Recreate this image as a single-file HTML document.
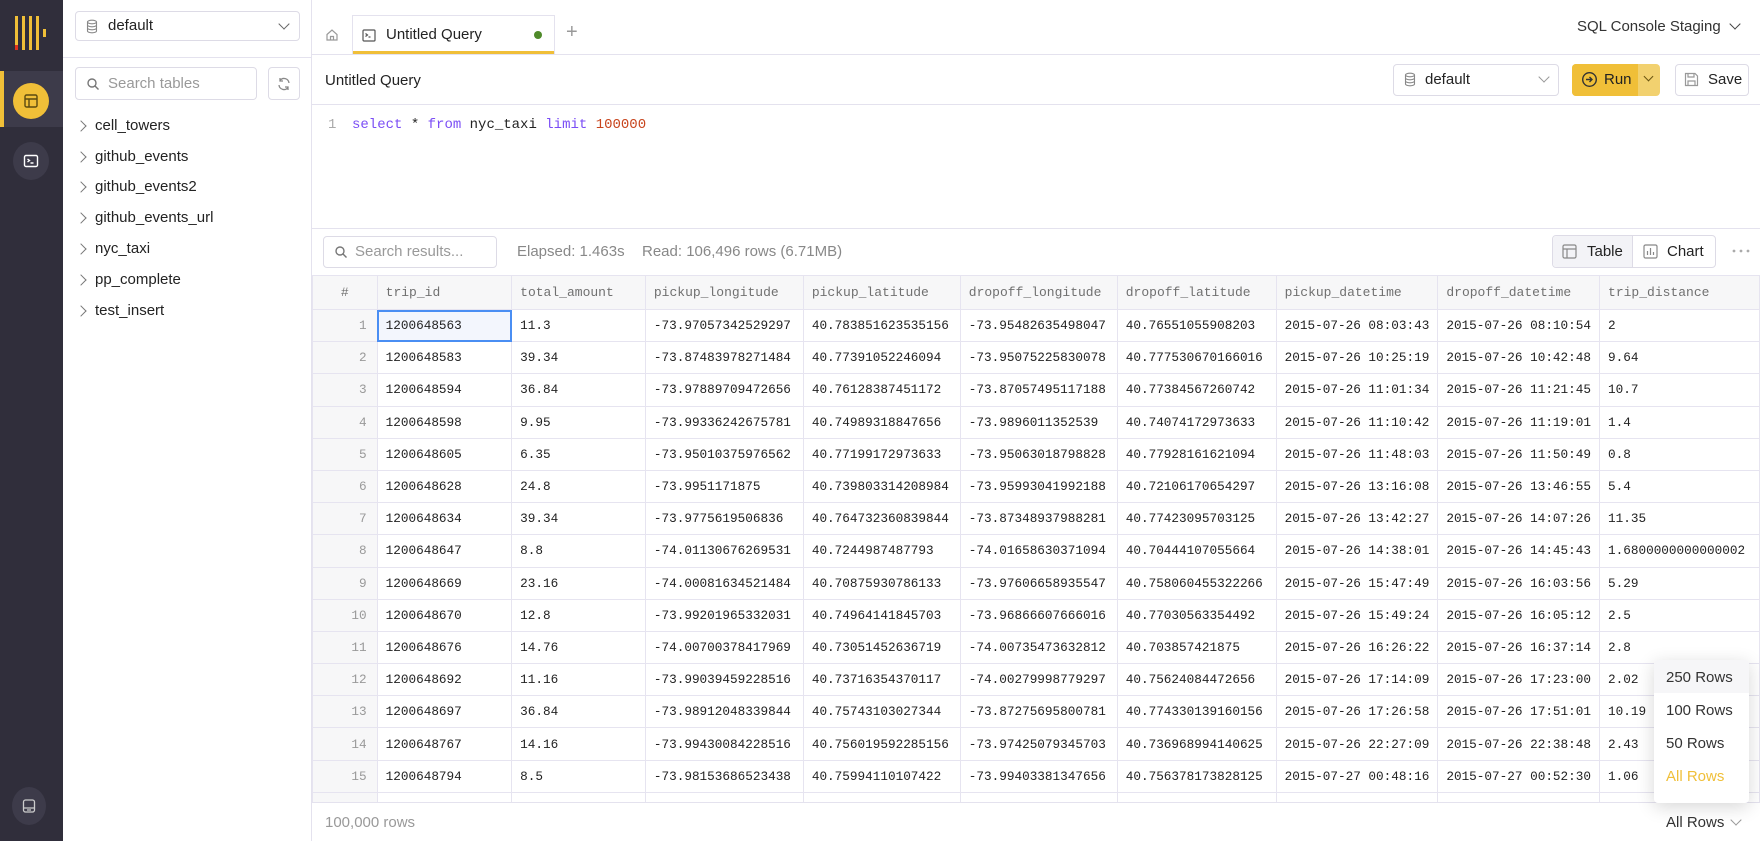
<!DOCTYPE html>
<html><head><meta charset="utf-8">
<style>
*{box-sizing:border-box;margin:0;padding:0}
body{width:1760px;height:841px;overflow:hidden;font-family:"Liberation Sans",sans-serif;color:#232323;background:#fff;position:relative}
.abs{position:absolute}
.rail{left:0;top:0;width:63px;height:841px;background:#302e3b}
.side{left:63px;top:0;width:249px;height:841px;background:#fff;border-right:1px solid #e4e2ee}
.box{position:absolute;border:1px solid #dddbe6;border-radius:4px;background:#fff}
.tree{position:absolute;left:95px;font-size:15px;color:#222}
.chev{position:absolute;left:77px;width:8px;height:8px;border-right:1.5px solid #777;border-top:1.5px solid #777;transform:rotate(45deg)}
.mono{font-family:"Liberation Mono",monospace}
.hline{position:absolute;height:1px;background:#e4e2ee}
.tbl{left:312px;top:275px;width:1448px;height:527px;overflow:hidden}
table{border-collapse:collapse;table-layout:fixed;font-family:"Liberation Mono",monospace;font-size:12.7px}
td,th{height:32.2px;border:1px solid #e6e4f0;padding:0 8px;white-space:nowrap;overflow:hidden;text-align:left;font-weight:normal}
th{background:#f7f7f8;color:#707070;height:34px;font-size:13px}
td.n{background:#f7f7f8;color:#999;text-align:right;padding-right:10px}
td{color:#222}
.sel{outline:2px solid #4a8ef3;outline-offset:-2px;background:#f3f6fd}
</style></head><body>

<div class="abs rail">
  <div class="abs" style="left:15px;top:16px;width:3px;height:34px;background:#f0bf38"></div>
  <div class="abs" style="left:15px;top:45px;width:3px;height:5px;background:#e0331e"></div>
  <div class="abs" style="left:22px;top:16px;width:3px;height:34px;background:#f0bf38"></div>
  <div class="abs" style="left:29px;top:16px;width:3px;height:34px;background:#f0bf38"></div>
  <div class="abs" style="left:36px;top:16px;width:3px;height:34px;background:#f0bf38"></div>
  <div class="abs" style="left:43px;top:29px;width:3px;height:8px;background:#f0bf38"></div>
  <div class="abs" style="left:0;top:71px;width:63px;height:56px;background:#3d3b4a"></div>
  <div class="abs" style="left:0;top:71px;width:4px;height:56px;background:#f0bf38"></div>
  <div class="abs" style="left:13px;top:83px;width:36px;height:36px;border-radius:50%;background:#f0bf38"></div>
  <svg class="abs" style="left:23px;top:93px" width="16" height="16" viewBox="0 0 16 16" fill="none" stroke="#5b4a10" stroke-width="1.4"><rect x="2" y="2" width="12" height="12" rx="1.5"/><path d="M2 6h12M6 6v8"/></svg>
  <div class="abs" style="left:13px;top:142px;width:36px;height:38px;border-radius:50%;background:#3d3b4a"></div>
  <svg class="abs" style="left:23px;top:153px" width="16" height="16" viewBox="0 0 16 16" fill="none" stroke="#fff" stroke-width="1.4"><rect x="1.5" y="2.5" width="13" height="11" rx="1.5"/><path d="M4.5 6l2 1.5-2 1.5M7.5 10h3"/></svg>
  <div class="abs" style="left:12px;top:787px;width:34px;height:38px;border-radius:50%;background:#3d3b4a"></div>
  <svg class="abs" style="left:21px;top:798px" width="16" height="16" viewBox="0 0 16 16" fill="none" stroke="#ccc" stroke-width="1.3"><rect x="2.5" y="2" width="11" height="12" rx="2"/><path d="M2.5 10h11M6 12h4"/></svg>
</div>

<div class="abs side"></div>
<div class="box" style="left:75px;top:11px;width:225px;height:30px"></div>
<svg class="abs" style="left:85px;top:19px" width="14" height="15" viewBox="0 0 14 15" fill="none" stroke="#888" stroke-width="1.1"><ellipse cx="7" cy="3" rx="4.5" ry="1.8"/><path d="M2.5 3v9c0 1 2 1.8 4.5 1.8s4.5-.8 4.5-1.8V3M2.5 6c0 1 2 1.8 4.5 1.8s4.5-.8 4.5-1.8M2.5 9c0 1 2 1.8 4.5 1.8s4.5-.8 4.5-1.8"/></svg>
<div class="abs" style="left:108px;top:17px;font-size:15px">default</div>
<div class="abs" style="left:280px;top:20px;width:8px;height:8px;border-right:1.5px solid #666;border-bottom:1.5px solid #666;transform:rotate(45deg)"></div>
<div class="hline" style="left:63px;top:57px;width:249px"></div>
<div class="box" style="left:75px;top:67px;width:182px;height:33px"></div>
<svg class="abs" style="left:86px;top:77px" width="14" height="14" viewBox="0 0 14 14" fill="none" stroke="#777" stroke-width="1.4"><circle cx="6" cy="6" r="4"/><path d="M9 9l3.5 3.5"/></svg>
<div class="abs" style="left:108px;top:75px;font-size:15px;color:#999">Search tables</div>
<div class="box" style="left:268px;top:67px;width:32px;height:33px"></div>
<svg class="abs" style="left:276px;top:76px" width="16" height="16" viewBox="0 0 16 16" fill="none" stroke="#888" stroke-width="1.3"><path d="M13 7a5 5 0 0 0-9-2.5M3 9a5 5 0 0 0 9 2.5M4 2v3h3M12 14v-3h-3"/></svg>

<div class="chev" style="top:122px"></div><div class="tree" style="top:117px">cell_towers</div>
<div class="chev" style="top:153px"></div><div class="tree" style="top:148px">github_events</div>
<div class="chev" style="top:183px"></div><div class="tree" style="top:178px">github_events2</div>
<div class="chev" style="top:214px"></div><div class="tree" style="top:209px">github_events_url</div>
<div class="chev" style="top:245px"></div><div class="tree" style="top:240px">nyc_taxi</div>
<div class="chev" style="top:276px"></div><div class="tree" style="top:271px">pp_complete</div>
<div class="chev" style="top:307px"></div><div class="tree" style="top:302px">test_insert</div>

<!-- tab bar -->
<div class="hline" style="left:312px;top:54px;width:1448px"></div>
<svg class="abs" style="left:325px;top:28px" width="14" height="14" viewBox="0 0 14 14" fill="none" stroke="#999" stroke-width="1.2"><path d="M2 6.5L7 2l5 4.5V12H2zM5.5 12V8.5h3V12"/></svg>
<div class="abs" style="left:352px;top:15px;width:1px;height:39px;background:#e4e2ee"></div>
<div class="abs" style="left:554px;top:15px;width:1px;height:39px;background:#e4e2ee"></div>
<div class="abs" style="left:352px;top:15px;width:203px;height:1px;background:#e4e2ee"></div>
<div class="abs" style="left:353px;top:51px;width:201px;height:3px;background:#f0bf38"></div>
<svg class="abs" style="left:362px;top:29px" width="14" height="13" viewBox="0 0 14 13" fill="none" stroke="#555" stroke-width="1.2"><rect x="1" y="1" width="12" height="11" rx="1"/><path d="M3.5 4.5l2 1.5-2 1.5M6.5 8h2"/></svg>
<div class="abs" style="left:386px;top:26px;font-size:15px">Untitled Query</div>
<div class="abs" style="left:534px;top:31px;width:8px;height:8px;border-radius:50%;background:#4f8a2a"></div>
<div class="abs" style="left:566px;top:21px;font-size:20px;color:#999;font-weight:300">+</div>
<div class="abs" style="left:1577px;top:18px;font-size:15px;color:#333">SQL Console Staging</div>
<div class="abs" style="left:1731px;top:20px;width:8px;height:8px;border-right:1.5px solid #444;border-bottom:1.5px solid #444;transform:rotate(45deg)"></div>

<!-- query header -->
<div class="abs" style="left:325px;top:72px;font-size:15px">Untitled Query</div>
<div class="hline" style="left:312px;top:104px;width:1448px"></div>
<div class="box" style="left:1393px;top:64px;width:166px;height:32px"></div>
<svg class="abs" style="left:1403px;top:72px" width="14" height="15" viewBox="0 0 14 15" fill="none" stroke="#888" stroke-width="1.1"><ellipse cx="7" cy="3" rx="4.5" ry="1.8"/><path d="M2.5 3v9c0 1 2 1.8 4.5 1.8s4.5-.8 4.5-1.8V3M2.5 6c0 1 2 1.8 4.5 1.8s4.5-.8 4.5-1.8M2.5 9c0 1 2 1.8 4.5 1.8s4.5-.8 4.5-1.8"/></svg>
<div class="abs" style="left:1425px;top:71px;font-size:15px">default</div>
<div class="abs" style="left:1540px;top:73px;width:8px;height:8px;border-right:1.3px solid #999;border-bottom:1.3px solid #999;transform:rotate(45deg)"></div>
<div class="abs" style="left:1572px;top:64px;width:88px;height:32px;border-radius:4px;background:#f2d16f"></div>
<div class="abs" style="left:1572px;top:64px;width:66px;height:32px;border-radius:4px 0 0 4px;background:#f0bf38"></div>
<svg class="abs" style="left:1581px;top:71px" width="17" height="17" viewBox="0 0 17 17" fill="none" stroke="#333" stroke-width="1.4"><circle cx="8.5" cy="8.5" r="6.8"/><path d="M5 8.5h6M8.5 6l2.5 2.5-2.5 2.5"/></svg>
<div class="abs" style="left:1604px;top:71px;font-size:15px;color:#222">Run</div>
<div class="abs" style="left:1645px;top:73px;width:7px;height:7px;border-right:1.5px solid #6a5410;border-bottom:1.5px solid #6a5410;transform:rotate(45deg)"></div>
<div class="box" style="left:1675px;top:64px;width:74px;height:32px"></div>
<svg class="abs" style="left:1684px;top:72px" width="15" height="15" viewBox="0 0 15 15" fill="none" stroke="#999" stroke-width="1.2"><path d="M1.5 1.5h9.5l2.5 2.5v9.5h-12z"/><path d="M4 1.5v3.5h6V1.5M4 13.5V9h7v4.5"/></svg>
<div class="abs" style="left:1708px;top:71px;font-size:15px">Save</div>

<!-- editor -->
<div class="abs mono" style="left:328px;top:117px;font-size:14px;color:#aaa">1</div>
<div class="abs mono" style="left:352px;top:117px;font-size:14px;color:#222;white-space:pre"><span style="color:#7b4ef5">select</span> * <span style="color:#7b4ef5">from</span> nyc_taxi <span style="color:#7b4ef5">limit</span> <span style="color:#c8451e">100000</span></div>
<div class="hline" style="left:312px;top:228px;width:1448px"></div>

<!-- results toolbar -->
<div class="box" style="left:323px;top:236px;width:174px;height:32px"></div>
<svg class="abs" style="left:334px;top:245px" width="14" height="14" viewBox="0 0 14 14" fill="none" stroke="#777" stroke-width="1.4"><circle cx="6" cy="6" r="4"/><path d="M9 9l3.5 3.5"/></svg>
<div class="abs" style="left:355px;top:243px;font-size:15px;color:#999">Search results...</div>
<div class="abs" style="left:517px;top:243px;font-size:15px;color:#888">Elapsed: 1.463s</div>
<div class="abs" style="left:642px;top:243px;font-size:15px;color:#888">Read: 106,496 rows (6.71MB)</div>
<div class="box" style="left:1552px;top:235px;width:164px;height:33px;background:#fff"></div>
<div class="abs" style="left:1553px;top:236px;width:80px;height:31px;background:#f3f3f7;border-right:1px solid #dddbe6;border-radius:4px 0 0 4px"></div>
<svg class="abs" style="left:1562px;top:244px" width="15" height="15" viewBox="0 0 15 15" fill="none" stroke="#888" stroke-width="1.2"><rect x="1" y="1" width="13" height="13" rx="1.5"/><path d="M1 5h13M5 5v9"/></svg>
<div class="abs" style="left:1587px;top:243px;font-size:15px">Table</div>
<svg class="abs" style="left:1643px;top:244px" width="15" height="15" viewBox="0 0 15 15" fill="none" stroke="#888" stroke-width="1.2"><rect x="1" y="1" width="13" height="13" rx="1.5"/><path d="M4.5 11V7M7.5 11V4M10.5 11V8"/></svg>
<div class="abs" style="left:1667px;top:243px;font-size:15px">Chart</div>
<svg class="abs" style="left:1732px;top:249px" width="18" height="4" viewBox="0 0 18 4" fill="#aaa"><circle cx="2" cy="2" r="1.4"/><circle cx="9" cy="2" r="1.4"/><circle cx="16" cy="2" r="1.4"/></svg>
<div class="hline" style="left:312px;top:275px;width:1448px"></div>

<div class="abs tbl">
<table>
<colgroup><col style="width:65px"><col style="width:135px"><col style="width:134px"><col style="width:158px"><col style="width:157px"><col style="width:157px"><col style="width:159px"><col style="width:160px"><col style="width:159px"><col style="width:160px"></colgroup>
<tr><th style="text-align:center">#</th><th>trip_id</th><th>total_amount</th><th>pickup_longitude</th><th>pickup_latitude</th><th>dropoff_longitude</th><th>dropoff_latitude</th><th>pickup_datetime</th><th>dropoff_datetime</th><th>trip_distance</th></tr>
<tr><td class="n">1</td><td class="sel">1200648563</td><td>11.3</td><td>-73.97057342529297</td><td>40.783851623535156</td><td>-73.95482635498047</td><td>40.76551055908203</td><td>2015-07-26 08:03:43</td><td>2015-07-26 08:10:54</td><td>2</td></tr>
<tr><td class="n">2</td><td>1200648583</td><td>39.34</td><td>-73.87483978271484</td><td>40.77391052246094</td><td>-73.95075225830078</td><td>40.777530670166016</td><td>2015-07-26 10:25:19</td><td>2015-07-26 10:42:48</td><td>9.64</td></tr>
<tr><td class="n">3</td><td>1200648594</td><td>36.84</td><td>-73.97889709472656</td><td>40.76128387451172</td><td>-73.87057495117188</td><td>40.77384567260742</td><td>2015-07-26 11:01:34</td><td>2015-07-26 11:21:45</td><td>10.7</td></tr>
<tr><td class="n">4</td><td>1200648598</td><td>9.95</td><td>-73.99336242675781</td><td>40.74989318847656</td><td>-73.9896011352539</td><td>40.74074172973633</td><td>2015-07-26 11:10:42</td><td>2015-07-26 11:19:01</td><td>1.4</td></tr>
<tr><td class="n">5</td><td>1200648605</td><td>6.35</td><td>-73.95010375976562</td><td>40.77199172973633</td><td>-73.95063018798828</td><td>40.77928161621094</td><td>2015-07-26 11:48:03</td><td>2015-07-26 11:50:49</td><td>0.8</td></tr>
<tr><td class="n">6</td><td>1200648628</td><td>24.8</td><td>-73.9951171875</td><td>40.739803314208984</td><td>-73.95993041992188</td><td>40.72106170654297</td><td>2015-07-26 13:16:08</td><td>2015-07-26 13:46:55</td><td>5.4</td></tr>
<tr><td class="n">7</td><td>1200648634</td><td>39.34</td><td>-73.9775619506836</td><td>40.764732360839844</td><td>-73.87348937988281</td><td>40.77423095703125</td><td>2015-07-26 13:42:27</td><td>2015-07-26 14:07:26</td><td>11.35</td></tr>
<tr><td class="n">8</td><td>1200648647</td><td>8.8</td><td>-74.01130676269531</td><td>40.7244987487793</td><td>-74.01658630371094</td><td>40.70444107055664</td><td>2015-07-26 14:38:01</td><td>2015-07-26 14:45:43</td><td>1.6800000000000002</td></tr>
<tr><td class="n">9</td><td>1200648669</td><td>23.16</td><td>-74.00081634521484</td><td>40.70875930786133</td><td>-73.97606658935547</td><td>40.758060455322266</td><td>2015-07-26 15:47:49</td><td>2015-07-26 16:03:56</td><td>5.29</td></tr>
<tr><td class="n">10</td><td>1200648670</td><td>12.8</td><td>-73.99201965332031</td><td>40.74964141845703</td><td>-73.96866607666016</td><td>40.77030563354492</td><td>2015-07-26 15:49:24</td><td>2015-07-26 16:05:12</td><td>2.5</td></tr>
<tr><td class="n">11</td><td>1200648676</td><td>14.76</td><td>-74.00700378417969</td><td>40.73051452636719</td><td>-74.00735473632812</td><td>40.703857421875</td><td>2015-07-26 16:26:22</td><td>2015-07-26 16:37:14</td><td>2.8</td></tr>
<tr><td class="n">12</td><td>1200648692</td><td>11.16</td><td>-73.99039459228516</td><td>40.73716354370117</td><td>-74.00279998779297</td><td>40.75624084472656</td><td>2015-07-26 17:14:09</td><td>2015-07-26 17:23:00</td><td>2.02</td></tr>
<tr><td class="n">13</td><td>1200648697</td><td>36.84</td><td>-73.98912048339844</td><td>40.75743103027344</td><td>-73.87275695800781</td><td>40.774330139160156</td><td>2015-07-26 17:26:58</td><td>2015-07-26 17:51:01</td><td>10.19</td></tr>
<tr><td class="n">14</td><td>1200648767</td><td>14.16</td><td>-73.99430084228516</td><td>40.756019592285156</td><td>-73.97425079345703</td><td>40.736968994140625</td><td>2015-07-26 22:27:09</td><td>2015-07-26 22:38:48</td><td>2.43</td></tr>
<tr><td class="n">15</td><td>1200648794</td><td>8.5</td><td>-73.98153686523438</td><td>40.75994110107422</td><td>-73.99403381347656</td><td>40.756378173828125</td><td>2015-07-27 00:48:16</td><td>2015-07-27 00:52:30</td><td>1.06</td></tr>
<tr><td class="n">16</td><td>1200648800</td><td>10.3</td><td>-73.99981689453125</td><td>40.71835327148438</td><td>-73.98859405517578</td><td>40.76821136474609</td><td>2015-07-27 05:40:19</td><td>2015-07-27 06:07:39</td><td>3.94</td></tr>
</table>
</div>

<!-- footer -->
<div class="hline" style="left:312px;top:802px;width:1448px"></div>
<div class="abs" style="left:325px;top:814px;font-size:15px;color:#999">100,000 rows</div>
<div class="abs" style="left:1666px;top:814px;font-size:15px;color:#333">All Rows</div>
<div class="abs" style="left:1732px;top:816px;width:8px;height:8px;border-right:1.3px solid #999;border-bottom:1.3px solid #999;transform:rotate(45deg)"></div>

<!-- dropdown -->
<div class="abs" style="left:1654px;top:660px;width:95px;height:143px;background:#fff;border-radius:4px;box-shadow:0 4px 18px rgba(0,0,0,0.16);overflow:hidden">
  <div style="height:33px;background:#f6f6f8;padding:9px 0 0 12px;font-size:15px;color:#333">250 Rows</div>
  <div style="height:33px;padding:9px 0 0 12px;font-size:15px;color:#333">100 Rows</div>
  <div style="height:33px;padding:9px 0 0 12px;font-size:15px;color:#333">50 Rows</div>
  <div style="height:33px;padding:9px 0 0 12px;font-size:15px;color:#f0bf38">All Rows</div>
</div>
</body></html>
